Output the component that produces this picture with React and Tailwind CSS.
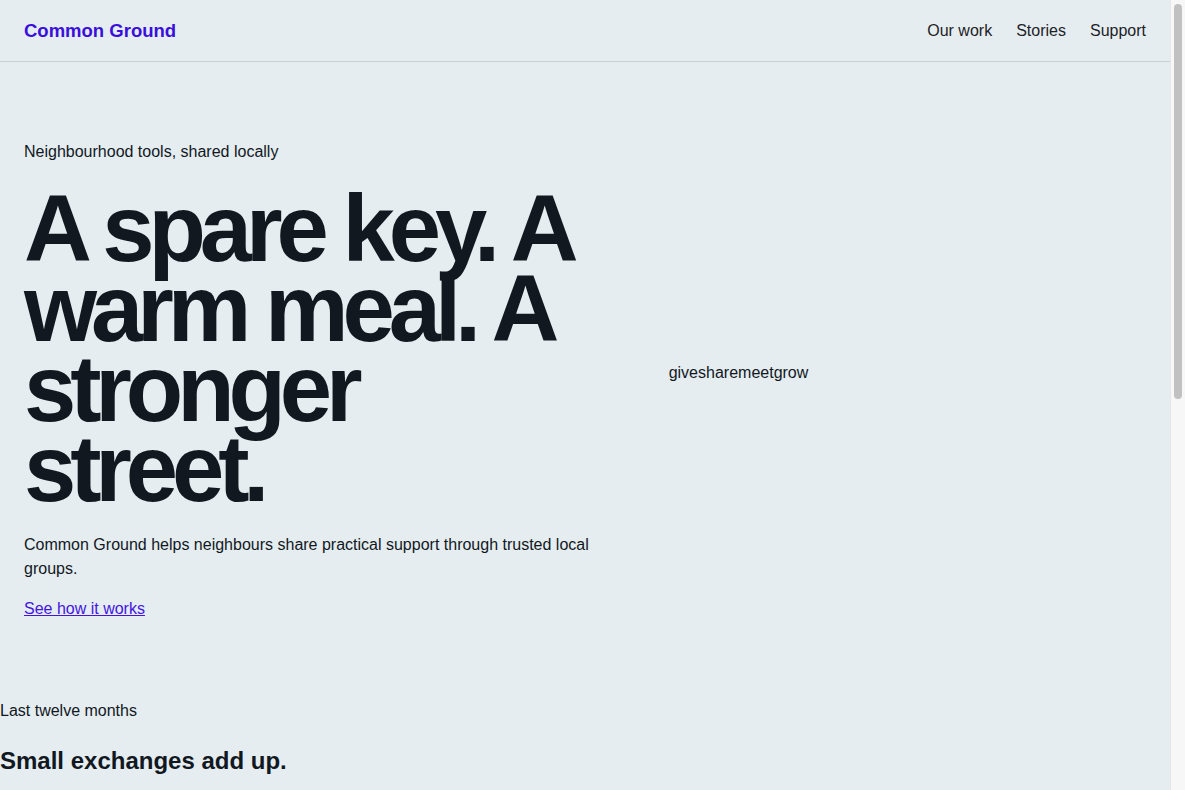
import React from 'react';

const words = ['give', 'share', 'meet', 'grow'];

const stats = [
    { value: '1,284', label: 'tools lent between neighbours' },
    { value: '3,910', label: 'meals shared from local kitchens' },
    { value: '212', label: 'trusted groups meeting each month' },
];

// window scrollbar as it shows in the reference
const ScrollBar = () => (
    <div className="fixed top-0 right-0 h-screen w-[15px] bg-[#f7f7f7] border-l border-[#e6e6e6] pt-[4px] px-[3px]">
        <div className="h-[395px] rounded-full bg-[#c1c1c1]" />
    </div>
);

const App = () => {
    return (
        <div className="min-h-screen bg-[#e5edf0] text-[#12181f] font-['Liberation_Sans',Arial,sans-serif]">
            <div className="mr-[15px]">
                <header className="h-[62px] px-6 flex items-center justify-between border-b border-[#c6cfd3]">
                    <a href="#" className="text-[18.5px] font-bold text-[#3a0fdc]">Common Ground</a>
                    <nav className="flex items-center gap-6 text-base text-[#1d2227]">
                        <a href="#">Our work</a>
                        <a href="#">Stories</a>
                        <a href="#">Support</a>
                    </nav>
                </header>

                <main>
                    <section className="px-6 pt-20 pb-[78px] grid grid-cols-[1.25fr_1fr] gap-12">
                        <div className="max-w-xl">
                            <p className="text-base leading-5">Neighbourhood tools, shared locally</p>
                            <h1 className="mt-[27px] text-[94px] leading-[80px] font-bold tracking-[-0.065em]">
                                A spare key. A warm meal. A stronger street.
                            </h1>
                            <p className="mt-6 text-base leading-6">
                                Common Ground helps neighbours share practical support through trusted local groups.
                            </p>
                            <a href="#" className="mt-4 inline-block text-base leading-6 text-[#4415e0] underline">See how it works</a>
                        </div>
                        <div className="flex items-center pb-[18px] text-base">
                            <div>
                                {words.map((w) => (
                                    <span key={w}>{w}</span>
                                ))}
                            </div>
                        </div>
                    </section>

                    <section>
                        <p className="text-base leading-6">Last twelve months</p>
                        <h2 className="mt-[22px] text-2xl leading-8 font-bold">Small exchanges add up.</h2>
                        <ul className="mt-8 flex flex-col gap-6">
                            {stats.map((s) => (
                                <li key={s.label}>
                                    <div className="text-5xl font-bold">{s.value}</div>
                                    <div className="text-base">{s.label}</div>
                                </li>
                            ))}
                        </ul>
                    </section>

                    <section className="px-6 py-20">
                        <h2 className="text-2xl font-bold">Start with one street.</h2>
                        <p className="mt-4 max-w-xl text-base leading-6">
                            Groups begin with a handful of neighbours, a shared list and a place to meet. We help with the rest.
                        </p>
                        <a href="#" className="mt-4 inline-block text-[#4415e0] underline">Find a group near you</a>
                    </section>
                </main>

                <footer className="px-6 py-16 border-t border-[#c6cfd3] text-sm">
                    <p>Common Ground — neighbourhood tools, shared locally.</p>
                    <p className="mt-2">Our work · Stories · Support</p>
                    <div className="h-[120px]" />
                </footer>
            </div>
            <ScrollBar />
        </div>
    );
};

export default App;
